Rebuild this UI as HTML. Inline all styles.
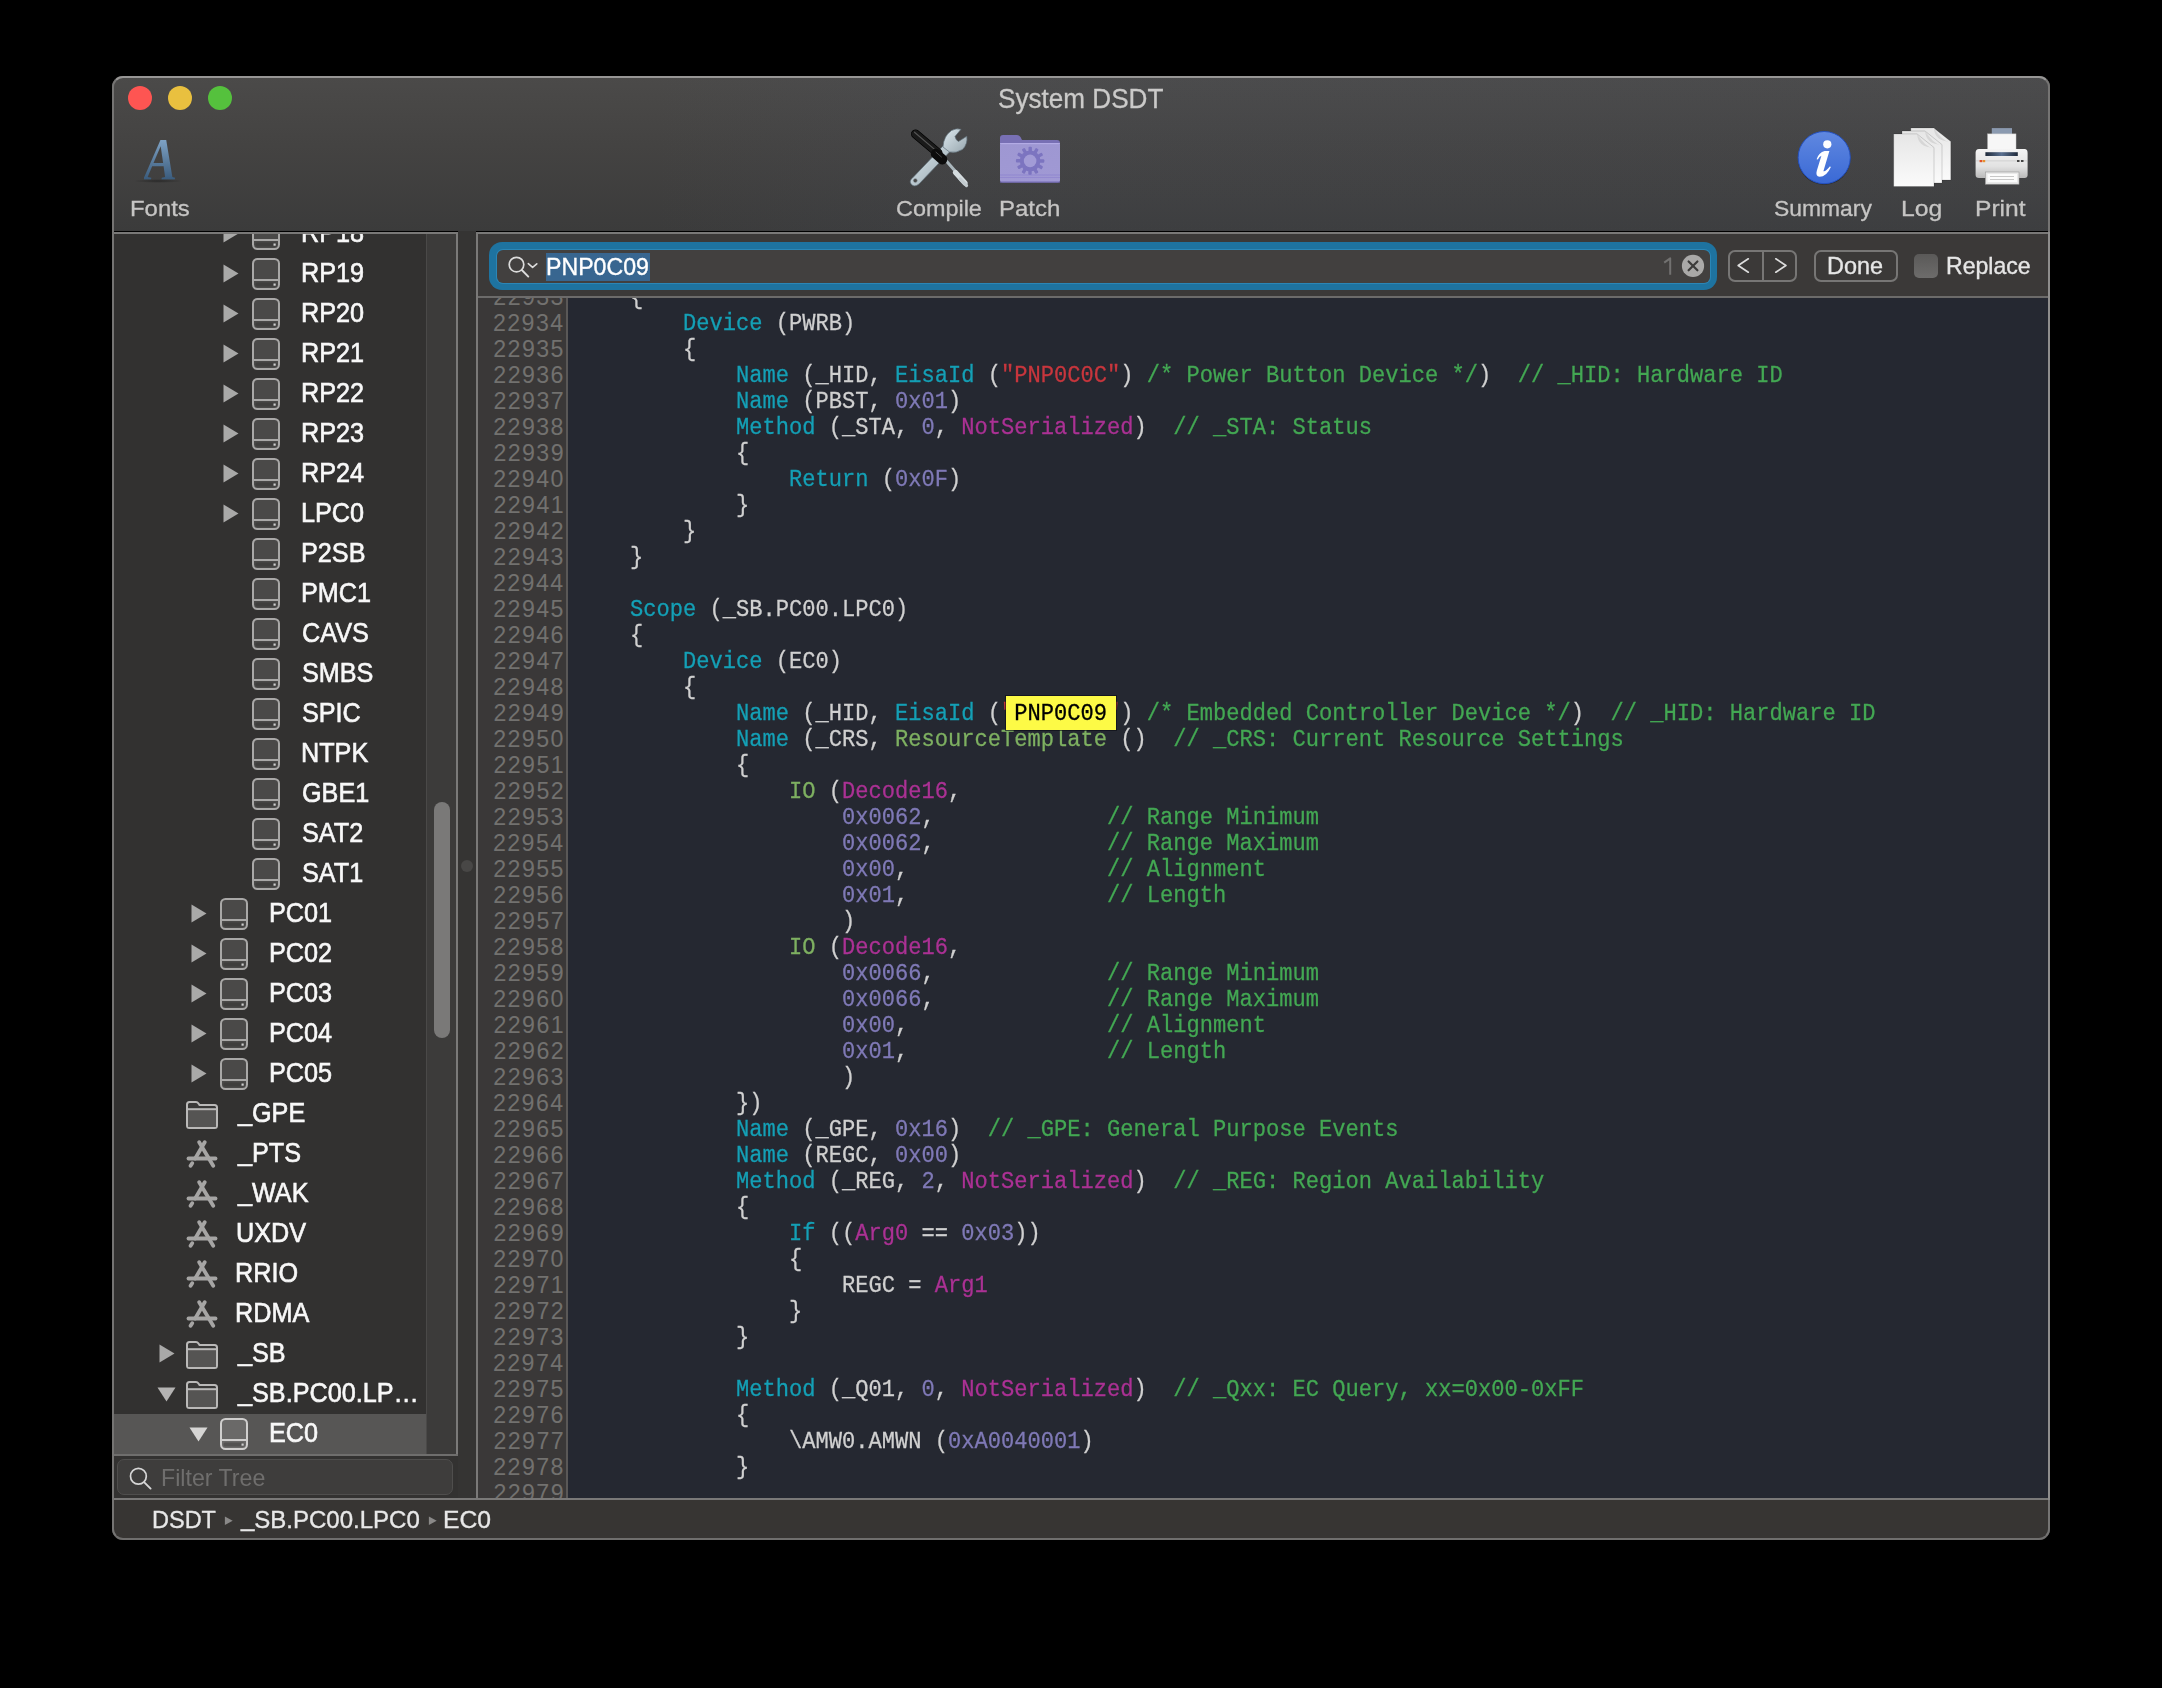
<!DOCTYPE html>
<html><head><meta charset="utf-8"><title>System DSDT</title>
<style>
html,body{margin:0;padding:0;background:#000;width:2162px;height:1688px;overflow:hidden;}
*{box-sizing:border-box;}
#win{position:absolute;left:112px;top:76px;width:1938px;height:1464px;border-radius:11px;overflow:hidden;background:#3a3938;}
#pg{position:absolute;left:-112px;top:-76px;width:2162px;height:1688px;}
#frame{position:absolute;left:112px;top:76px;width:1938px;height:1464px;border-radius:11px;border:2px solid #757473;border-top-color:#979695;border-bottom-color:#6f6e6d;pointer-events:none;}
.hl{color:#c8363d;}
.k{color:#14a0b6}.n{color:#7f79b6}.m{color:#ab3194}.s{color:#c8363d}.c{color:#43a853}.g{color:#7eb061}
</style></head><body>
<div id="win"><div id="pg">

<div style="position:absolute;left:112px;top:76px;width:1938px;height:155px;background:linear-gradient(#4b4a49 0%, #444342 45%, #3b3b3b 100%);"></div>
<div style="position:absolute;left:112px;top:76px;width:1938px;height:155px;background:linear-gradient(90deg, rgba(80,90,110,0) 0%, rgba(80,90,110,0) 28%, rgba(80,90,110,0.10) 42%, rgba(80,90,110,0.10) 100%);"></div>
<div style="position:absolute;left:112px;top:231px;width:1938px;height:1px;background:#000;"></div>
<div style="position:absolute;left:128px;top:86px;width:24px;height:24px;border-radius:50%;background:#fe5552;"></div>
<div style="position:absolute;left:168px;top:86px;width:24px;height:24px;border-radius:50%;background:#e9c03f;"></div>
<div style="position:absolute;left:208px;top:86px;width:24px;height:24px;border-radius:50%;background:#55c13d;"></div>
<div style="position:absolute;left:997.71px;top:78.33px;line-height:41px;font-size:27.326px;font-family:'Liberation Sans', sans-serif;color:#cbcac9;white-space:pre;transform:scaleX(0.9561);transform-origin:0 0;-webkit-text-stroke:0.3px #cbcac9;">System DSDT</div>
<div style="position:absolute;left:129.84px;top:190.84px;line-height:34px;font-size:22.675px;font-family:'Liberation Sans', sans-serif;color:#c6c5c4;white-space:pre;transform:scaleX(1.0550);transform-origin:0 0;-webkit-text-stroke:0.3px #c6c5c4;">Fonts</div>
<div style="position:absolute;left:895.51px;top:190.84px;line-height:34px;font-size:22.675px;font-family:'Liberation Sans', sans-serif;color:#c6c5c4;white-space:pre;transform:scaleX(1.0332);transform-origin:0 0;-webkit-text-stroke:0.3px #c6c5c4;">Compile</div>
<div style="position:absolute;left:998.73px;top:190.84px;line-height:34px;font-size:22.675px;font-family:'Liberation Sans', sans-serif;color:#c6c5c4;white-space:pre;transform:scaleX(1.0595);transform-origin:0 0;-webkit-text-stroke:0.3px #c6c5c4;">Patch</div>
<div style="position:absolute;left:1774.46px;top:190.84px;line-height:34px;font-size:22.675px;font-family:'Liberation Sans', sans-serif;color:#c6c5c4;white-space:pre;transform:scaleX(1.0100);transform-origin:0 0;-webkit-text-stroke:0.3px #c6c5c4;">Summary</div>
<div style="position:absolute;left:1900.77px;top:190.84px;line-height:34px;font-size:22.675px;font-family:'Liberation Sans', sans-serif;color:#c6c5c4;white-space:pre;transform:scaleX(1.0924);transform-origin:0 0;-webkit-text-stroke:0.3px #c6c5c4;">Log</div>
<div style="position:absolute;left:1975.38px;top:190.84px;line-height:34px;font-size:22.675px;font-family:'Liberation Sans', sans-serif;color:#c6c5c4;white-space:pre;transform:scaleX(1.0853);transform-origin:0 0;-webkit-text-stroke:0.3px #c6c5c4;">Print</div>
<div style="position:absolute;left:112px;top:232px;width:346px;height:2px;background:#7a7978;"></div>
<div style="position:absolute;left:112px;top:234px;width:314px;height:1221px;background:#323130;"></div>
<div style="position:absolute;left:426px;top:234px;width:1px;height:1221px;background:#4a4948;"></div>
<div style="position:absolute;left:427px;top:234px;width:29px;height:1221px;background:#3c3b3a;"></div>
<div style="position:absolute;left:456px;top:232px;width:2px;height:1223px;background:#7b7a79;"></div>
<div style="position:absolute;left:458px;top:231px;width:18px;height:1268px;background:#353433;"></div>
<div style="position:absolute;left:461px;top:860px;width:12px;height:12px;border-radius:50%;background:#484746;"></div>
<div style="position:absolute;left:434px;top:802px;width:16px;height:236px;border-radius:8px;background:#7a7978;"></div>
<div style="position:absolute;left:112px;top:1454px;width:346px;height:2px;background:#6f6e6d;"></div>
<div style="position:absolute;left:112px;top:1456px;width:346px;height:43px;background:#333231;"></div>
<div style="position:absolute;left:117px;top:1459px;width:336px;height:36px;border-radius:7px;background:#3e3d3c;border:1px solid #4f4e4d;"></div>
<div style="position:absolute;left:476px;top:232px;width:1574px;height:2px;background:#7a7978;"></div>
<div style="position:absolute;left:476px;top:234px;width:2px;height:1265px;background:#7a7978;"></div>
<div style="position:absolute;left:478px;top:234px;width:1572px;height:63px;background:#3b3938;"></div>
<div style="position:absolute;left:478px;top:296px;width:1572px;height:2px;background:#6c6b6a;"></div>
<div style="position:absolute;left:478px;top:298px;width:88px;height:1201px;background:#3a3838;"></div>
<div style="position:absolute;left:566px;top:298px;width:1.6px;height:1201px;background:#5a5857;"></div>
<div style="position:absolute;left:567.6px;top:298px;width:1482.4px;height:1201px;background:#252831;"></div>
<div style="position:absolute;left:2048px;top:298px;width:2px;height:1201px;background:#8a8988;"></div>
<div style="position:absolute;left:112px;top:1498px;width:1938px;height:2px;background:#7a7978;"></div>
<div style="position:absolute;left:112px;top:1500px;width:1938px;height:40px;background:#373533;"></div>
<div style="position:absolute;left:567px;top:298px;width:1481px;height:1200px;overflow:hidden;">
<div style="position:absolute;left:-567px;top:-298px;width:2162px;height:1688px;">
<div style="position:absolute;left:577.00px;top:285.72px;line-height:26px;font-size:22.080px;font-family:'Liberation Mono', monospace;color:#d0d0d0;white-space:pre;-webkit-text-stroke:0.25px currentColor;transform:scaleY(1.11);transform-origin:0 18.88px;">    {</div>
<div style="position:absolute;left:577.00px;top:311.72px;line-height:26px;font-size:22.080px;font-family:'Liberation Mono', monospace;color:#d0d0d0;white-space:pre;-webkit-text-stroke:0.25px currentColor;transform:scaleY(1.11);transform-origin:0 18.88px;">        <span class="k">Device</span> (PWRB)</div>
<div style="position:absolute;left:577.00px;top:337.72px;line-height:26px;font-size:22.080px;font-family:'Liberation Mono', monospace;color:#d0d0d0;white-space:pre;-webkit-text-stroke:0.25px currentColor;transform:scaleY(1.11);transform-origin:0 18.88px;">        {</div>
<div style="position:absolute;left:577.00px;top:363.72px;line-height:26px;font-size:22.080px;font-family:'Liberation Mono', monospace;color:#d0d0d0;white-space:pre;-webkit-text-stroke:0.25px currentColor;transform:scaleY(1.11);transform-origin:0 18.88px;">            <span class="k">Name</span> (_HID, <span class="k">EisaId</span> (<span class="s">&quot;PNP0C0C&quot;</span>) <span class="c">/* Power Button Device */</span>)  <span class="c">// _HID: Hardware ID</span></div>
<div style="position:absolute;left:577.00px;top:389.72px;line-height:26px;font-size:22.080px;font-family:'Liberation Mono', monospace;color:#d0d0d0;white-space:pre;-webkit-text-stroke:0.25px currentColor;transform:scaleY(1.11);transform-origin:0 18.88px;">            <span class="k">Name</span> (PBST, <span class="n">0x01</span>)</div>
<div style="position:absolute;left:577.00px;top:415.72px;line-height:26px;font-size:22.080px;font-family:'Liberation Mono', monospace;color:#d0d0d0;white-space:pre;-webkit-text-stroke:0.25px currentColor;transform:scaleY(1.11);transform-origin:0 18.88px;">            <span class="k">Method</span> (_STA, <span class="n">0</span>, <span class="m">NotSerialized</span>)  <span class="c">// _STA: Status</span></div>
<div style="position:absolute;left:577.00px;top:441.72px;line-height:26px;font-size:22.080px;font-family:'Liberation Mono', monospace;color:#d0d0d0;white-space:pre;-webkit-text-stroke:0.25px currentColor;transform:scaleY(1.11);transform-origin:0 18.88px;">            {</div>
<div style="position:absolute;left:577.00px;top:467.72px;line-height:26px;font-size:22.080px;font-family:'Liberation Mono', monospace;color:#d0d0d0;white-space:pre;-webkit-text-stroke:0.25px currentColor;transform:scaleY(1.11);transform-origin:0 18.88px;">                <span class="k">Return</span> (<span class="n">0x0F</span>)</div>
<div style="position:absolute;left:577.00px;top:493.72px;line-height:26px;font-size:22.080px;font-family:'Liberation Mono', monospace;color:#d0d0d0;white-space:pre;-webkit-text-stroke:0.25px currentColor;transform:scaleY(1.11);transform-origin:0 18.88px;">            }</div>
<div style="position:absolute;left:577.00px;top:519.72px;line-height:26px;font-size:22.080px;font-family:'Liberation Mono', monospace;color:#d0d0d0;white-space:pre;-webkit-text-stroke:0.25px currentColor;transform:scaleY(1.11);transform-origin:0 18.88px;">        }</div>
<div style="position:absolute;left:577.00px;top:545.72px;line-height:26px;font-size:22.080px;font-family:'Liberation Mono', monospace;color:#d0d0d0;white-space:pre;-webkit-text-stroke:0.25px currentColor;transform:scaleY(1.11);transform-origin:0 18.88px;">    }</div>
<div style="position:absolute;left:577.00px;top:571.72px;line-height:26px;font-size:22.080px;font-family:'Liberation Mono', monospace;color:#d0d0d0;white-space:pre;-webkit-text-stroke:0.25px currentColor;transform:scaleY(1.11);transform-origin:0 18.88px;"></div>
<div style="position:absolute;left:577.00px;top:597.72px;line-height:26px;font-size:22.080px;font-family:'Liberation Mono', monospace;color:#d0d0d0;white-space:pre;-webkit-text-stroke:0.25px currentColor;transform:scaleY(1.11);transform-origin:0 18.88px;">    <span class="k">Scope</span> (_SB.PC00.LPC0)</div>
<div style="position:absolute;left:577.00px;top:623.72px;line-height:26px;font-size:22.080px;font-family:'Liberation Mono', monospace;color:#d0d0d0;white-space:pre;-webkit-text-stroke:0.25px currentColor;transform:scaleY(1.11);transform-origin:0 18.88px;">    {</div>
<div style="position:absolute;left:577.00px;top:649.72px;line-height:26px;font-size:22.080px;font-family:'Liberation Mono', monospace;color:#d0d0d0;white-space:pre;-webkit-text-stroke:0.25px currentColor;transform:scaleY(1.11);transform-origin:0 18.88px;">        <span class="k">Device</span> (EC0)</div>
<div style="position:absolute;left:577.00px;top:675.72px;line-height:26px;font-size:22.080px;font-family:'Liberation Mono', monospace;color:#d0d0d0;white-space:pre;-webkit-text-stroke:0.25px currentColor;transform:scaleY(1.11);transform-origin:0 18.88px;">        {</div>
<div style="position:absolute;left:577.00px;top:701.72px;line-height:26px;font-size:22.080px;font-family:'Liberation Mono', monospace;color:#d0d0d0;white-space:pre;-webkit-text-stroke:0.25px currentColor;transform:scaleY(1.11);transform-origin:0 18.88px;">            <span class="k">Name</span> (_HID, <span class="k">EisaId</span> (<span class="s">"</span><span class="hl">PNP0C09</span><span class="s">"</span>) <span class="c">/* Embedded Controller Device */</span>)  <span class="c">// _HID: Hardware ID</span></div>
<div style="position:absolute;left:577.00px;top:727.72px;line-height:26px;font-size:22.080px;font-family:'Liberation Mono', monospace;color:#d0d0d0;white-space:pre;-webkit-text-stroke:0.25px currentColor;transform:scaleY(1.11);transform-origin:0 18.88px;">            <span class="k">Name</span> (_CRS, <span class="g">ResourceTemplate</span> ()  <span class="c">// _CRS: Current Resource Settings</span></div>
<div style="position:absolute;left:577.00px;top:753.72px;line-height:26px;font-size:22.080px;font-family:'Liberation Mono', monospace;color:#d0d0d0;white-space:pre;-webkit-text-stroke:0.25px currentColor;transform:scaleY(1.11);transform-origin:0 18.88px;">            {</div>
<div style="position:absolute;left:577.00px;top:779.72px;line-height:26px;font-size:22.080px;font-family:'Liberation Mono', monospace;color:#d0d0d0;white-space:pre;-webkit-text-stroke:0.25px currentColor;transform:scaleY(1.11);transform-origin:0 18.88px;">                <span class="g">IO</span> (<span class="m">Decode16</span>,</div>
<div style="position:absolute;left:577.00px;top:805.72px;line-height:26px;font-size:22.080px;font-family:'Liberation Mono', monospace;color:#d0d0d0;white-space:pre;-webkit-text-stroke:0.25px currentColor;transform:scaleY(1.11);transform-origin:0 18.88px;">                    <span class="n">0x0062</span>,             <span class="c">// Range Minimum</span></div>
<div style="position:absolute;left:577.00px;top:831.72px;line-height:26px;font-size:22.080px;font-family:'Liberation Mono', monospace;color:#d0d0d0;white-space:pre;-webkit-text-stroke:0.25px currentColor;transform:scaleY(1.11);transform-origin:0 18.88px;">                    <span class="n">0x0062</span>,             <span class="c">// Range Maximum</span></div>
<div style="position:absolute;left:577.00px;top:857.72px;line-height:26px;font-size:22.080px;font-family:'Liberation Mono', monospace;color:#d0d0d0;white-space:pre;-webkit-text-stroke:0.25px currentColor;transform:scaleY(1.11);transform-origin:0 18.88px;">                    <span class="n">0x00</span>,               <span class="c">// Alignment</span></div>
<div style="position:absolute;left:577.00px;top:883.72px;line-height:26px;font-size:22.080px;font-family:'Liberation Mono', monospace;color:#d0d0d0;white-space:pre;-webkit-text-stroke:0.25px currentColor;transform:scaleY(1.11);transform-origin:0 18.88px;">                    <span class="n">0x01</span>,               <span class="c">// Length</span></div>
<div style="position:absolute;left:577.00px;top:909.72px;line-height:26px;font-size:22.080px;font-family:'Liberation Mono', monospace;color:#d0d0d0;white-space:pre;-webkit-text-stroke:0.25px currentColor;transform:scaleY(1.11);transform-origin:0 18.88px;">                    )</div>
<div style="position:absolute;left:577.00px;top:935.72px;line-height:26px;font-size:22.080px;font-family:'Liberation Mono', monospace;color:#d0d0d0;white-space:pre;-webkit-text-stroke:0.25px currentColor;transform:scaleY(1.11);transform-origin:0 18.88px;">                <span class="g">IO</span> (<span class="m">Decode16</span>,</div>
<div style="position:absolute;left:577.00px;top:961.72px;line-height:26px;font-size:22.080px;font-family:'Liberation Mono', monospace;color:#d0d0d0;white-space:pre;-webkit-text-stroke:0.25px currentColor;transform:scaleY(1.11);transform-origin:0 18.88px;">                    <span class="n">0x0066</span>,             <span class="c">// Range Minimum</span></div>
<div style="position:absolute;left:577.00px;top:987.72px;line-height:26px;font-size:22.080px;font-family:'Liberation Mono', monospace;color:#d0d0d0;white-space:pre;-webkit-text-stroke:0.25px currentColor;transform:scaleY(1.11);transform-origin:0 18.88px;">                    <span class="n">0x0066</span>,             <span class="c">// Range Maximum</span></div>
<div style="position:absolute;left:577.00px;top:1013.72px;line-height:26px;font-size:22.080px;font-family:'Liberation Mono', monospace;color:#d0d0d0;white-space:pre;-webkit-text-stroke:0.25px currentColor;transform:scaleY(1.11);transform-origin:0 18.88px;">                    <span class="n">0x00</span>,               <span class="c">// Alignment</span></div>
<div style="position:absolute;left:577.00px;top:1039.72px;line-height:26px;font-size:22.080px;font-family:'Liberation Mono', monospace;color:#d0d0d0;white-space:pre;-webkit-text-stroke:0.25px currentColor;transform:scaleY(1.11);transform-origin:0 18.88px;">                    <span class="n">0x01</span>,               <span class="c">// Length</span></div>
<div style="position:absolute;left:577.00px;top:1065.72px;line-height:26px;font-size:22.080px;font-family:'Liberation Mono', monospace;color:#d0d0d0;white-space:pre;-webkit-text-stroke:0.25px currentColor;transform:scaleY(1.11);transform-origin:0 18.88px;">                    )</div>
<div style="position:absolute;left:577.00px;top:1091.72px;line-height:26px;font-size:22.080px;font-family:'Liberation Mono', monospace;color:#d0d0d0;white-space:pre;-webkit-text-stroke:0.25px currentColor;transform:scaleY(1.11);transform-origin:0 18.88px;">            })</div>
<div style="position:absolute;left:577.00px;top:1117.72px;line-height:26px;font-size:22.080px;font-family:'Liberation Mono', monospace;color:#d0d0d0;white-space:pre;-webkit-text-stroke:0.25px currentColor;transform:scaleY(1.11);transform-origin:0 18.88px;">            <span class="k">Name</span> (_GPE, <span class="n">0x16</span>)  <span class="c">// _GPE: General Purpose Events</span></div>
<div style="position:absolute;left:577.00px;top:1143.72px;line-height:26px;font-size:22.080px;font-family:'Liberation Mono', monospace;color:#d0d0d0;white-space:pre;-webkit-text-stroke:0.25px currentColor;transform:scaleY(1.11);transform-origin:0 18.88px;">            <span class="k">Name</span> (REGC, <span class="n">0x00</span>)</div>
<div style="position:absolute;left:577.00px;top:1169.72px;line-height:26px;font-size:22.080px;font-family:'Liberation Mono', monospace;color:#d0d0d0;white-space:pre;-webkit-text-stroke:0.25px currentColor;transform:scaleY(1.11);transform-origin:0 18.88px;">            <span class="k">Method</span> (_REG, <span class="n">2</span>, <span class="m">NotSerialized</span>)  <span class="c">// _REG: Region Availability</span></div>
<div style="position:absolute;left:577.00px;top:1195.72px;line-height:26px;font-size:22.080px;font-family:'Liberation Mono', monospace;color:#d0d0d0;white-space:pre;-webkit-text-stroke:0.25px currentColor;transform:scaleY(1.11);transform-origin:0 18.88px;">            {</div>
<div style="position:absolute;left:577.00px;top:1221.72px;line-height:26px;font-size:22.080px;font-family:'Liberation Mono', monospace;color:#d0d0d0;white-space:pre;-webkit-text-stroke:0.25px currentColor;transform:scaleY(1.11);transform-origin:0 18.88px;">                <span class="k">If</span> ((<span class="m">Arg0</span> == <span class="n">0x03</span>))</div>
<div style="position:absolute;left:577.00px;top:1247.72px;line-height:26px;font-size:22.080px;font-family:'Liberation Mono', monospace;color:#d0d0d0;white-space:pre;-webkit-text-stroke:0.25px currentColor;transform:scaleY(1.11);transform-origin:0 18.88px;">                {</div>
<div style="position:absolute;left:577.00px;top:1273.72px;line-height:26px;font-size:22.080px;font-family:'Liberation Mono', monospace;color:#d0d0d0;white-space:pre;-webkit-text-stroke:0.25px currentColor;transform:scaleY(1.11);transform-origin:0 18.88px;">                    REGC = <span class="m">Arg1</span></div>
<div style="position:absolute;left:577.00px;top:1299.72px;line-height:26px;font-size:22.080px;font-family:'Liberation Mono', monospace;color:#d0d0d0;white-space:pre;-webkit-text-stroke:0.25px currentColor;transform:scaleY(1.11);transform-origin:0 18.88px;">                }</div>
<div style="position:absolute;left:577.00px;top:1325.72px;line-height:26px;font-size:22.080px;font-family:'Liberation Mono', monospace;color:#d0d0d0;white-space:pre;-webkit-text-stroke:0.25px currentColor;transform:scaleY(1.11);transform-origin:0 18.88px;">            }</div>
<div style="position:absolute;left:577.00px;top:1351.72px;line-height:26px;font-size:22.080px;font-family:'Liberation Mono', monospace;color:#d0d0d0;white-space:pre;-webkit-text-stroke:0.25px currentColor;transform:scaleY(1.11);transform-origin:0 18.88px;"></div>
<div style="position:absolute;left:577.00px;top:1377.72px;line-height:26px;font-size:22.080px;font-family:'Liberation Mono', monospace;color:#d0d0d0;white-space:pre;-webkit-text-stroke:0.25px currentColor;transform:scaleY(1.11);transform-origin:0 18.88px;">            <span class="k">Method</span> (_Q01, <span class="n">0</span>, <span class="m">NotSerialized</span>)  <span class="c">// _Qxx: EC Query, xx=0x00-0xFF</span></div>
<div style="position:absolute;left:577.00px;top:1403.72px;line-height:26px;font-size:22.080px;font-family:'Liberation Mono', monospace;color:#d0d0d0;white-space:pre;-webkit-text-stroke:0.25px currentColor;transform:scaleY(1.11);transform-origin:0 18.88px;">            {</div>
<div style="position:absolute;left:577.00px;top:1429.72px;line-height:26px;font-size:22.080px;font-family:'Liberation Mono', monospace;color:#d0d0d0;white-space:pre;-webkit-text-stroke:0.25px currentColor;transform:scaleY(1.11);transform-origin:0 18.88px;">                \AMW0.AMWN (<span class="n">0xA0040001</span>)</div>
<div style="position:absolute;left:577.00px;top:1455.72px;line-height:26px;font-size:22.080px;font-family:'Liberation Mono', monospace;color:#d0d0d0;white-space:pre;-webkit-text-stroke:0.25px currentColor;transform:scaleY(1.11);transform-origin:0 18.88px;">            }</div>
<div style="position:absolute;left:577.00px;top:1481.72px;line-height:26px;font-size:22.080px;font-family:'Liberation Mono', monospace;color:#d0d0d0;white-space:pre;-webkit-text-stroke:0.25px currentColor;transform:scaleY(1.11);transform-origin:0 18.88px;"></div>
<div style="position:absolute;left:1005.8px;top:695.7px;width:110.4px;height:34px;background:#fdfa46;box-shadow:0 0 0 1px rgba(10,10,20,0.6);"></div>
<div style="position:absolute;left:1014.26px;top:701.72px;line-height:26px;font-size:22.080px;font-family:'Liberation Mono', monospace;color:#000;white-space:pre;-webkit-text-stroke:0.3px #000;transform:scaleY(1.11);transform-origin:0 18.88px;">PNP0C09</div>
</div></div>
<div style="position:absolute;left:478px;top:298px;width:87px;height:1200px;overflow:hidden;">
<div style="position:absolute;left:-478px;top:-298px;width:2162px;height:1688px;">
<div style="position:absolute;left:493.33px;top:283.56px;line-height:26px;font-size:23.20px;letter-spacing:1.42px;font-family:'Liberation Sans', sans-serif;color:#72716f;white-space:pre;">22933</div>
<div style="position:absolute;left:492.99px;top:309.56px;line-height:26px;font-size:23.20px;letter-spacing:1.42px;font-family:'Liberation Sans', sans-serif;color:#72716f;white-space:pre;">22934</div>
<div style="position:absolute;left:493.28px;top:335.56px;line-height:26px;font-size:23.20px;letter-spacing:1.42px;font-family:'Liberation Sans', sans-serif;color:#72716f;white-space:pre;">22935</div>
<div style="position:absolute;left:493.33px;top:361.56px;line-height:26px;font-size:23.20px;letter-spacing:1.42px;font-family:'Liberation Sans', sans-serif;color:#72716f;white-space:pre;">22936</div>
<div style="position:absolute;left:493.47px;top:387.56px;line-height:26px;font-size:23.20px;letter-spacing:1.42px;font-family:'Liberation Sans', sans-serif;color:#72716f;white-space:pre;">22937</div>
<div style="position:absolute;left:493.31px;top:413.56px;line-height:26px;font-size:23.20px;letter-spacing:1.42px;font-family:'Liberation Sans', sans-serif;color:#72716f;white-space:pre;">22938</div>
<div style="position:absolute;left:493.41px;top:439.56px;line-height:26px;font-size:23.20px;letter-spacing:1.42px;font-family:'Liberation Sans', sans-serif;color:#72716f;white-space:pre;">22939</div>
<div style="position:absolute;left:493.21px;top:465.56px;line-height:26px;font-size:23.20px;letter-spacing:1.42px;font-family:'Liberation Sans', sans-serif;color:#72716f;white-space:pre;">22940</div>
<div style="position:absolute;left:493.44px;top:491.56px;line-height:26px;font-size:23.20px;letter-spacing:1.42px;font-family:'Liberation Sans', sans-serif;color:#72716f;white-space:pre;">22941</div>
<div style="position:absolute;left:493.47px;top:517.56px;line-height:26px;font-size:23.20px;letter-spacing:1.42px;font-family:'Liberation Sans', sans-serif;color:#72716f;white-space:pre;">22942</div>
<div style="position:absolute;left:493.33px;top:543.56px;line-height:26px;font-size:23.20px;letter-spacing:1.42px;font-family:'Liberation Sans', sans-serif;color:#72716f;white-space:pre;">22943</div>
<div style="position:absolute;left:492.99px;top:569.56px;line-height:26px;font-size:23.20px;letter-spacing:1.42px;font-family:'Liberation Sans', sans-serif;color:#72716f;white-space:pre;">22944</div>
<div style="position:absolute;left:493.28px;top:595.56px;line-height:26px;font-size:23.20px;letter-spacing:1.42px;font-family:'Liberation Sans', sans-serif;color:#72716f;white-space:pre;">22945</div>
<div style="position:absolute;left:493.33px;top:621.56px;line-height:26px;font-size:23.20px;letter-spacing:1.42px;font-family:'Liberation Sans', sans-serif;color:#72716f;white-space:pre;">22946</div>
<div style="position:absolute;left:493.47px;top:647.56px;line-height:26px;font-size:23.20px;letter-spacing:1.42px;font-family:'Liberation Sans', sans-serif;color:#72716f;white-space:pre;">22947</div>
<div style="position:absolute;left:493.31px;top:673.56px;line-height:26px;font-size:23.20px;letter-spacing:1.42px;font-family:'Liberation Sans', sans-serif;color:#72716f;white-space:pre;">22948</div>
<div style="position:absolute;left:493.41px;top:699.56px;line-height:26px;font-size:23.20px;letter-spacing:1.42px;font-family:'Liberation Sans', sans-serif;color:#72716f;white-space:pre;">22949</div>
<div style="position:absolute;left:493.21px;top:725.56px;line-height:26px;font-size:23.20px;letter-spacing:1.42px;font-family:'Liberation Sans', sans-serif;color:#72716f;white-space:pre;">22950</div>
<div style="position:absolute;left:493.44px;top:751.56px;line-height:26px;font-size:23.20px;letter-spacing:1.42px;font-family:'Liberation Sans', sans-serif;color:#72716f;white-space:pre;">22951</div>
<div style="position:absolute;left:493.47px;top:777.56px;line-height:26px;font-size:23.20px;letter-spacing:1.42px;font-family:'Liberation Sans', sans-serif;color:#72716f;white-space:pre;">22952</div>
<div style="position:absolute;left:493.33px;top:803.56px;line-height:26px;font-size:23.20px;letter-spacing:1.42px;font-family:'Liberation Sans', sans-serif;color:#72716f;white-space:pre;">22953</div>
<div style="position:absolute;left:492.99px;top:829.56px;line-height:26px;font-size:23.20px;letter-spacing:1.42px;font-family:'Liberation Sans', sans-serif;color:#72716f;white-space:pre;">22954</div>
<div style="position:absolute;left:493.28px;top:855.56px;line-height:26px;font-size:23.20px;letter-spacing:1.42px;font-family:'Liberation Sans', sans-serif;color:#72716f;white-space:pre;">22955</div>
<div style="position:absolute;left:493.33px;top:881.56px;line-height:26px;font-size:23.20px;letter-spacing:1.42px;font-family:'Liberation Sans', sans-serif;color:#72716f;white-space:pre;">22956</div>
<div style="position:absolute;left:493.47px;top:907.56px;line-height:26px;font-size:23.20px;letter-spacing:1.42px;font-family:'Liberation Sans', sans-serif;color:#72716f;white-space:pre;">22957</div>
<div style="position:absolute;left:493.31px;top:933.56px;line-height:26px;font-size:23.20px;letter-spacing:1.42px;font-family:'Liberation Sans', sans-serif;color:#72716f;white-space:pre;">22958</div>
<div style="position:absolute;left:493.41px;top:959.56px;line-height:26px;font-size:23.20px;letter-spacing:1.42px;font-family:'Liberation Sans', sans-serif;color:#72716f;white-space:pre;">22959</div>
<div style="position:absolute;left:493.21px;top:985.56px;line-height:26px;font-size:23.20px;letter-spacing:1.42px;font-family:'Liberation Sans', sans-serif;color:#72716f;white-space:pre;">22960</div>
<div style="position:absolute;left:493.44px;top:1011.56px;line-height:26px;font-size:23.20px;letter-spacing:1.42px;font-family:'Liberation Sans', sans-serif;color:#72716f;white-space:pre;">22961</div>
<div style="position:absolute;left:493.47px;top:1037.56px;line-height:26px;font-size:23.20px;letter-spacing:1.42px;font-family:'Liberation Sans', sans-serif;color:#72716f;white-space:pre;">22962</div>
<div style="position:absolute;left:493.33px;top:1063.56px;line-height:26px;font-size:23.20px;letter-spacing:1.42px;font-family:'Liberation Sans', sans-serif;color:#72716f;white-space:pre;">22963</div>
<div style="position:absolute;left:492.99px;top:1089.56px;line-height:26px;font-size:23.20px;letter-spacing:1.42px;font-family:'Liberation Sans', sans-serif;color:#72716f;white-space:pre;">22964</div>
<div style="position:absolute;left:493.28px;top:1115.56px;line-height:26px;font-size:23.20px;letter-spacing:1.42px;font-family:'Liberation Sans', sans-serif;color:#72716f;white-space:pre;">22965</div>
<div style="position:absolute;left:493.33px;top:1141.56px;line-height:26px;font-size:23.20px;letter-spacing:1.42px;font-family:'Liberation Sans', sans-serif;color:#72716f;white-space:pre;">22966</div>
<div style="position:absolute;left:493.47px;top:1167.56px;line-height:26px;font-size:23.20px;letter-spacing:1.42px;font-family:'Liberation Sans', sans-serif;color:#72716f;white-space:pre;">22967</div>
<div style="position:absolute;left:493.31px;top:1193.56px;line-height:26px;font-size:23.20px;letter-spacing:1.42px;font-family:'Liberation Sans', sans-serif;color:#72716f;white-space:pre;">22968</div>
<div style="position:absolute;left:493.41px;top:1219.56px;line-height:26px;font-size:23.20px;letter-spacing:1.42px;font-family:'Liberation Sans', sans-serif;color:#72716f;white-space:pre;">22969</div>
<div style="position:absolute;left:493.21px;top:1245.56px;line-height:26px;font-size:23.20px;letter-spacing:1.42px;font-family:'Liberation Sans', sans-serif;color:#72716f;white-space:pre;">22970</div>
<div style="position:absolute;left:493.44px;top:1271.56px;line-height:26px;font-size:23.20px;letter-spacing:1.42px;font-family:'Liberation Sans', sans-serif;color:#72716f;white-space:pre;">22971</div>
<div style="position:absolute;left:493.47px;top:1297.56px;line-height:26px;font-size:23.20px;letter-spacing:1.42px;font-family:'Liberation Sans', sans-serif;color:#72716f;white-space:pre;">22972</div>
<div style="position:absolute;left:493.33px;top:1323.56px;line-height:26px;font-size:23.20px;letter-spacing:1.42px;font-family:'Liberation Sans', sans-serif;color:#72716f;white-space:pre;">22973</div>
<div style="position:absolute;left:492.99px;top:1349.56px;line-height:26px;font-size:23.20px;letter-spacing:1.42px;font-family:'Liberation Sans', sans-serif;color:#72716f;white-space:pre;">22974</div>
<div style="position:absolute;left:493.28px;top:1375.56px;line-height:26px;font-size:23.20px;letter-spacing:1.42px;font-family:'Liberation Sans', sans-serif;color:#72716f;white-space:pre;">22975</div>
<div style="position:absolute;left:493.33px;top:1401.56px;line-height:26px;font-size:23.20px;letter-spacing:1.42px;font-family:'Liberation Sans', sans-serif;color:#72716f;white-space:pre;">22976</div>
<div style="position:absolute;left:493.47px;top:1427.56px;line-height:26px;font-size:23.20px;letter-spacing:1.42px;font-family:'Liberation Sans', sans-serif;color:#72716f;white-space:pre;">22977</div>
<div style="position:absolute;left:493.31px;top:1453.56px;line-height:26px;font-size:23.20px;letter-spacing:1.42px;font-family:'Liberation Sans', sans-serif;color:#72716f;white-space:pre;">22978</div>
<div style="position:absolute;left:493.41px;top:1479.56px;line-height:26px;font-size:23.20px;letter-spacing:1.42px;font-family:'Liberation Sans', sans-serif;color:#72716f;white-space:pre;">22979</div>
</div></div>
<div style="position:absolute;left:112px;top:234px;width:314px;height:1220px;overflow:hidden;">
<div style="position:absolute;left:-112px;top:-234px;width:2162px;height:1688px;">
<svg style="position:absolute;left:252px;top:218px" width="28" height="32" viewBox="0 0 28 32"><rect x="1" y="1" width="26" height="30" rx="4.5" fill="#4a4948" stroke="#a9a8a7" stroke-width="2"/><path d="M2 22 H26" stroke="#a9a8a7" stroke-width="2"/><rect x="3.5" y="24.5" width="21" height="4" rx="1.5" fill="#3f3e3d"/><rect x="21.5" y="25.5" width="2.2" height="2.2" fill="#d0d0d0"/></svg>
<svg style="position:absolute;left:223px;top:224px" width="16" height="19" viewBox="0 0 16 19"><path d="M0.5 0.5 L15.5 9.5 L0.5 18.5 Z" fill="#a9a9a8"/></svg>
<div style="position:absolute;left:301.03px;top:213.18px;line-height:40px;font-size:27.762px;font-family:'Liberation Sans', sans-serif;color:#f8f8f8;white-space:pre;-webkit-text-stroke:0.65px #f8f8f8;transform:scaleX(0.908);transform-origin:0 0;">RP18</div>
<svg style="position:absolute;left:252px;top:258px" width="28" height="32" viewBox="0 0 28 32"><rect x="1" y="1" width="26" height="30" rx="4.5" fill="#4a4948" stroke="#a9a8a7" stroke-width="2"/><path d="M2 22 H26" stroke="#a9a8a7" stroke-width="2"/><rect x="3.5" y="24.5" width="21" height="4" rx="1.5" fill="#3f3e3d"/><rect x="21.5" y="25.5" width="2.2" height="2.2" fill="#d0d0d0"/></svg>
<svg style="position:absolute;left:223px;top:264px" width="16" height="19" viewBox="0 0 16 19"><path d="M0.5 0.5 L15.5 9.5 L0.5 18.5 Z" fill="#a9a9a8"/></svg>
<div style="position:absolute;left:301.03px;top:253.18px;line-height:40px;font-size:27.762px;font-family:'Liberation Sans', sans-serif;color:#f8f8f8;white-space:pre;-webkit-text-stroke:0.65px #f8f8f8;transform:scaleX(0.908);transform-origin:0 0;">RP19</div>
<svg style="position:absolute;left:252px;top:298px" width="28" height="32" viewBox="0 0 28 32"><rect x="1" y="1" width="26" height="30" rx="4.5" fill="#4a4948" stroke="#a9a8a7" stroke-width="2"/><path d="M2 22 H26" stroke="#a9a8a7" stroke-width="2"/><rect x="3.5" y="24.5" width="21" height="4" rx="1.5" fill="#3f3e3d"/><rect x="21.5" y="25.5" width="2.2" height="2.2" fill="#d0d0d0"/></svg>
<svg style="position:absolute;left:223px;top:304px" width="16" height="19" viewBox="0 0 16 19"><path d="M0.5 0.5 L15.5 9.5 L0.5 18.5 Z" fill="#a9a9a8"/></svg>
<div style="position:absolute;left:301.03px;top:293.18px;line-height:40px;font-size:27.762px;font-family:'Liberation Sans', sans-serif;color:#f8f8f8;white-space:pre;-webkit-text-stroke:0.65px #f8f8f8;transform:scaleX(0.908);transform-origin:0 0;">RP20</div>
<svg style="position:absolute;left:252px;top:338px" width="28" height="32" viewBox="0 0 28 32"><rect x="1" y="1" width="26" height="30" rx="4.5" fill="#4a4948" stroke="#a9a8a7" stroke-width="2"/><path d="M2 22 H26" stroke="#a9a8a7" stroke-width="2"/><rect x="3.5" y="24.5" width="21" height="4" rx="1.5" fill="#3f3e3d"/><rect x="21.5" y="25.5" width="2.2" height="2.2" fill="#d0d0d0"/></svg>
<svg style="position:absolute;left:223px;top:344px" width="16" height="19" viewBox="0 0 16 19"><path d="M0.5 0.5 L15.5 9.5 L0.5 18.5 Z" fill="#a9a9a8"/></svg>
<div style="position:absolute;left:301.03px;top:333.18px;line-height:40px;font-size:27.762px;font-family:'Liberation Sans', sans-serif;color:#f8f8f8;white-space:pre;-webkit-text-stroke:0.65px #f8f8f8;transform:scaleX(0.908);transform-origin:0 0;">RP21</div>
<svg style="position:absolute;left:252px;top:378px" width="28" height="32" viewBox="0 0 28 32"><rect x="1" y="1" width="26" height="30" rx="4.5" fill="#4a4948" stroke="#a9a8a7" stroke-width="2"/><path d="M2 22 H26" stroke="#a9a8a7" stroke-width="2"/><rect x="3.5" y="24.5" width="21" height="4" rx="1.5" fill="#3f3e3d"/><rect x="21.5" y="25.5" width="2.2" height="2.2" fill="#d0d0d0"/></svg>
<svg style="position:absolute;left:223px;top:384px" width="16" height="19" viewBox="0 0 16 19"><path d="M0.5 0.5 L15.5 9.5 L0.5 18.5 Z" fill="#a9a9a8"/></svg>
<div style="position:absolute;left:301.03px;top:373.18px;line-height:40px;font-size:27.762px;font-family:'Liberation Sans', sans-serif;color:#f8f8f8;white-space:pre;-webkit-text-stroke:0.65px #f8f8f8;transform:scaleX(0.908);transform-origin:0 0;">RP22</div>
<svg style="position:absolute;left:252px;top:418px" width="28" height="32" viewBox="0 0 28 32"><rect x="1" y="1" width="26" height="30" rx="4.5" fill="#4a4948" stroke="#a9a8a7" stroke-width="2"/><path d="M2 22 H26" stroke="#a9a8a7" stroke-width="2"/><rect x="3.5" y="24.5" width="21" height="4" rx="1.5" fill="#3f3e3d"/><rect x="21.5" y="25.5" width="2.2" height="2.2" fill="#d0d0d0"/></svg>
<svg style="position:absolute;left:223px;top:424px" width="16" height="19" viewBox="0 0 16 19"><path d="M0.5 0.5 L15.5 9.5 L0.5 18.5 Z" fill="#a9a9a8"/></svg>
<div style="position:absolute;left:301.03px;top:413.18px;line-height:40px;font-size:27.762px;font-family:'Liberation Sans', sans-serif;color:#f8f8f8;white-space:pre;-webkit-text-stroke:0.65px #f8f8f8;transform:scaleX(0.908);transform-origin:0 0;">RP23</div>
<svg style="position:absolute;left:252px;top:458px" width="28" height="32" viewBox="0 0 28 32"><rect x="1" y="1" width="26" height="30" rx="4.5" fill="#4a4948" stroke="#a9a8a7" stroke-width="2"/><path d="M2 22 H26" stroke="#a9a8a7" stroke-width="2"/><rect x="3.5" y="24.5" width="21" height="4" rx="1.5" fill="#3f3e3d"/><rect x="21.5" y="25.5" width="2.2" height="2.2" fill="#d0d0d0"/></svg>
<svg style="position:absolute;left:223px;top:464px" width="16" height="19" viewBox="0 0 16 19"><path d="M0.5 0.5 L15.5 9.5 L0.5 18.5 Z" fill="#a9a9a8"/></svg>
<div style="position:absolute;left:301.03px;top:453.18px;line-height:40px;font-size:27.762px;font-family:'Liberation Sans', sans-serif;color:#f8f8f8;white-space:pre;-webkit-text-stroke:0.65px #f8f8f8;transform:scaleX(0.908);transform-origin:0 0;">RP24</div>
<svg style="position:absolute;left:252px;top:498px" width="28" height="32" viewBox="0 0 28 32"><rect x="1" y="1" width="26" height="30" rx="4.5" fill="#4a4948" stroke="#a9a8a7" stroke-width="2"/><path d="M2 22 H26" stroke="#a9a8a7" stroke-width="2"/><rect x="3.5" y="24.5" width="21" height="4" rx="1.5" fill="#3f3e3d"/><rect x="21.5" y="25.5" width="2.2" height="2.2" fill="#d0d0d0"/></svg>
<svg style="position:absolute;left:223px;top:504px" width="16" height="19" viewBox="0 0 16 19"><path d="M0.5 0.5 L15.5 9.5 L0.5 18.5 Z" fill="#a9a9a8"/></svg>
<div style="position:absolute;left:301.03px;top:493.18px;line-height:40px;font-size:27.762px;font-family:'Liberation Sans', sans-serif;color:#f8f8f8;white-space:pre;-webkit-text-stroke:0.65px #f8f8f8;transform:scaleX(0.908);transform-origin:0 0;">LPC0</div>
<svg style="position:absolute;left:252px;top:538px" width="28" height="32" viewBox="0 0 28 32"><rect x="1" y="1" width="26" height="30" rx="4.5" fill="#4a4948" stroke="#a9a8a7" stroke-width="2"/><path d="M2 22 H26" stroke="#a9a8a7" stroke-width="2"/><rect x="3.5" y="24.5" width="21" height="4" rx="1.5" fill="#3f3e3d"/><rect x="21.5" y="25.5" width="2.2" height="2.2" fill="#d0d0d0"/></svg>
<div style="position:absolute;left:301.03px;top:533.18px;line-height:40px;font-size:27.762px;font-family:'Liberation Sans', sans-serif;color:#f8f8f8;white-space:pre;-webkit-text-stroke:0.65px #f8f8f8;transform:scaleX(0.908);transform-origin:0 0;">P2SB</div>
<svg style="position:absolute;left:252px;top:578px" width="28" height="32" viewBox="0 0 28 32"><rect x="1" y="1" width="26" height="30" rx="4.5" fill="#4a4948" stroke="#a9a8a7" stroke-width="2"/><path d="M2 22 H26" stroke="#a9a8a7" stroke-width="2"/><rect x="3.5" y="24.5" width="21" height="4" rx="1.5" fill="#3f3e3d"/><rect x="21.5" y="25.5" width="2.2" height="2.2" fill="#d0d0d0"/></svg>
<div style="position:absolute;left:301.03px;top:573.18px;line-height:40px;font-size:27.762px;font-family:'Liberation Sans', sans-serif;color:#f8f8f8;white-space:pre;-webkit-text-stroke:0.65px #f8f8f8;transform:scaleX(0.908);transform-origin:0 0;">PMC1</div>
<svg style="position:absolute;left:252px;top:618px" width="28" height="32" viewBox="0 0 28 32"><rect x="1" y="1" width="26" height="30" rx="4.5" fill="#4a4948" stroke="#a9a8a7" stroke-width="2"/><path d="M2 22 H26" stroke="#a9a8a7" stroke-width="2"/><rect x="3.5" y="24.5" width="21" height="4" rx="1.5" fill="#3f3e3d"/><rect x="21.5" y="25.5" width="2.2" height="2.2" fill="#d0d0d0"/></svg>
<div style="position:absolute;left:301.82px;top:613.18px;line-height:40px;font-size:27.762px;font-family:'Liberation Sans', sans-serif;color:#f8f8f8;white-space:pre;-webkit-text-stroke:0.65px #f8f8f8;transform:scaleX(0.908);transform-origin:0 0;">CAVS</div>
<svg style="position:absolute;left:252px;top:658px" width="28" height="32" viewBox="0 0 28 32"><rect x="1" y="1" width="26" height="30" rx="4.5" fill="#4a4948" stroke="#a9a8a7" stroke-width="2"/><path d="M2 22 H26" stroke="#a9a8a7" stroke-width="2"/><rect x="3.5" y="24.5" width="21" height="4" rx="1.5" fill="#3f3e3d"/><rect x="21.5" y="25.5" width="2.2" height="2.2" fill="#d0d0d0"/></svg>
<div style="position:absolute;left:301.96px;top:653.18px;line-height:40px;font-size:27.762px;font-family:'Liberation Sans', sans-serif;color:#f8f8f8;white-space:pre;-webkit-text-stroke:0.65px #f8f8f8;transform:scaleX(0.908);transform-origin:0 0;">SMBS</div>
<svg style="position:absolute;left:252px;top:698px" width="28" height="32" viewBox="0 0 28 32"><rect x="1" y="1" width="26" height="30" rx="4.5" fill="#4a4948" stroke="#a9a8a7" stroke-width="2"/><path d="M2 22 H26" stroke="#a9a8a7" stroke-width="2"/><rect x="3.5" y="24.5" width="21" height="4" rx="1.5" fill="#3f3e3d"/><rect x="21.5" y="25.5" width="2.2" height="2.2" fill="#d0d0d0"/></svg>
<div style="position:absolute;left:301.96px;top:693.18px;line-height:40px;font-size:27.762px;font-family:'Liberation Sans', sans-serif;color:#f8f8f8;white-space:pre;-webkit-text-stroke:0.65px #f8f8f8;transform:scaleX(0.908);transform-origin:0 0;">SPIC</div>
<svg style="position:absolute;left:252px;top:738px" width="28" height="32" viewBox="0 0 28 32"><rect x="1" y="1" width="26" height="30" rx="4.5" fill="#4a4948" stroke="#a9a8a7" stroke-width="2"/><path d="M2 22 H26" stroke="#a9a8a7" stroke-width="2"/><rect x="3.5" y="24.5" width="21" height="4" rx="1.5" fill="#3f3e3d"/><rect x="21.5" y="25.5" width="2.2" height="2.2" fill="#d0d0d0"/></svg>
<div style="position:absolute;left:301.03px;top:733.18px;line-height:40px;font-size:27.762px;font-family:'Liberation Sans', sans-serif;color:#f8f8f8;white-space:pre;-webkit-text-stroke:0.65px #f8f8f8;transform:scaleX(0.908);transform-origin:0 0;">NTPK</div>
<svg style="position:absolute;left:252px;top:778px" width="28" height="32" viewBox="0 0 28 32"><rect x="1" y="1" width="26" height="30" rx="4.5" fill="#4a4948" stroke="#a9a8a7" stroke-width="2"/><path d="M2 22 H26" stroke="#a9a8a7" stroke-width="2"/><rect x="3.5" y="24.5" width="21" height="4" rx="1.5" fill="#3f3e3d"/><rect x="21.5" y="25.5" width="2.2" height="2.2" fill="#d0d0d0"/></svg>
<div style="position:absolute;left:301.83px;top:773.18px;line-height:40px;font-size:27.762px;font-family:'Liberation Sans', sans-serif;color:#f8f8f8;white-space:pre;-webkit-text-stroke:0.65px #f8f8f8;transform:scaleX(0.908);transform-origin:0 0;">GBE1</div>
<svg style="position:absolute;left:252px;top:818px" width="28" height="32" viewBox="0 0 28 32"><rect x="1" y="1" width="26" height="30" rx="4.5" fill="#4a4948" stroke="#a9a8a7" stroke-width="2"/><path d="M2 22 H26" stroke="#a9a8a7" stroke-width="2"/><rect x="3.5" y="24.5" width="21" height="4" rx="1.5" fill="#3f3e3d"/><rect x="21.5" y="25.5" width="2.2" height="2.2" fill="#d0d0d0"/></svg>
<div style="position:absolute;left:301.96px;top:813.18px;line-height:40px;font-size:27.762px;font-family:'Liberation Sans', sans-serif;color:#f8f8f8;white-space:pre;-webkit-text-stroke:0.65px #f8f8f8;transform:scaleX(0.908);transform-origin:0 0;">SAT2</div>
<svg style="position:absolute;left:252px;top:858px" width="28" height="32" viewBox="0 0 28 32"><rect x="1" y="1" width="26" height="30" rx="4.5" fill="#4a4948" stroke="#a9a8a7" stroke-width="2"/><path d="M2 22 H26" stroke="#a9a8a7" stroke-width="2"/><rect x="3.5" y="24.5" width="21" height="4" rx="1.5" fill="#3f3e3d"/><rect x="21.5" y="25.5" width="2.2" height="2.2" fill="#d0d0d0"/></svg>
<div style="position:absolute;left:301.96px;top:853.18px;line-height:40px;font-size:27.762px;font-family:'Liberation Sans', sans-serif;color:#f8f8f8;white-space:pre;-webkit-text-stroke:0.65px #f8f8f8;transform:scaleX(0.908);transform-origin:0 0;">SAT1</div>
<svg style="position:absolute;left:220px;top:898px" width="28" height="32" viewBox="0 0 28 32"><rect x="1" y="1" width="26" height="30" rx="4.5" fill="#4a4948" stroke="#a9a8a7" stroke-width="2"/><path d="M2 22 H26" stroke="#a9a8a7" stroke-width="2"/><rect x="3.5" y="24.5" width="21" height="4" rx="1.5" fill="#3f3e3d"/><rect x="21.5" y="25.5" width="2.2" height="2.2" fill="#d0d0d0"/></svg>
<svg style="position:absolute;left:191px;top:904px" width="16" height="19" viewBox="0 0 16 19"><path d="M0.5 0.5 L15.5 9.5 L0.5 18.5 Z" fill="#a9a9a8"/></svg>
<div style="position:absolute;left:269.03px;top:893.18px;line-height:40px;font-size:27.762px;font-family:'Liberation Sans', sans-serif;color:#f8f8f8;white-space:pre;-webkit-text-stroke:0.65px #f8f8f8;transform:scaleX(0.908);transform-origin:0 0;">PC01</div>
<svg style="position:absolute;left:220px;top:938px" width="28" height="32" viewBox="0 0 28 32"><rect x="1" y="1" width="26" height="30" rx="4.5" fill="#4a4948" stroke="#a9a8a7" stroke-width="2"/><path d="M2 22 H26" stroke="#a9a8a7" stroke-width="2"/><rect x="3.5" y="24.5" width="21" height="4" rx="1.5" fill="#3f3e3d"/><rect x="21.5" y="25.5" width="2.2" height="2.2" fill="#d0d0d0"/></svg>
<svg style="position:absolute;left:191px;top:944px" width="16" height="19" viewBox="0 0 16 19"><path d="M0.5 0.5 L15.5 9.5 L0.5 18.5 Z" fill="#a9a9a8"/></svg>
<div style="position:absolute;left:269.03px;top:933.18px;line-height:40px;font-size:27.762px;font-family:'Liberation Sans', sans-serif;color:#f8f8f8;white-space:pre;-webkit-text-stroke:0.65px #f8f8f8;transform:scaleX(0.908);transform-origin:0 0;">PC02</div>
<svg style="position:absolute;left:220px;top:978px" width="28" height="32" viewBox="0 0 28 32"><rect x="1" y="1" width="26" height="30" rx="4.5" fill="#4a4948" stroke="#a9a8a7" stroke-width="2"/><path d="M2 22 H26" stroke="#a9a8a7" stroke-width="2"/><rect x="3.5" y="24.5" width="21" height="4" rx="1.5" fill="#3f3e3d"/><rect x="21.5" y="25.5" width="2.2" height="2.2" fill="#d0d0d0"/></svg>
<svg style="position:absolute;left:191px;top:984px" width="16" height="19" viewBox="0 0 16 19"><path d="M0.5 0.5 L15.5 9.5 L0.5 18.5 Z" fill="#a9a9a8"/></svg>
<div style="position:absolute;left:269.03px;top:973.18px;line-height:40px;font-size:27.762px;font-family:'Liberation Sans', sans-serif;color:#f8f8f8;white-space:pre;-webkit-text-stroke:0.65px #f8f8f8;transform:scaleX(0.908);transform-origin:0 0;">PC03</div>
<svg style="position:absolute;left:220px;top:1018px" width="28" height="32" viewBox="0 0 28 32"><rect x="1" y="1" width="26" height="30" rx="4.5" fill="#4a4948" stroke="#a9a8a7" stroke-width="2"/><path d="M2 22 H26" stroke="#a9a8a7" stroke-width="2"/><rect x="3.5" y="24.5" width="21" height="4" rx="1.5" fill="#3f3e3d"/><rect x="21.5" y="25.5" width="2.2" height="2.2" fill="#d0d0d0"/></svg>
<svg style="position:absolute;left:191px;top:1024px" width="16" height="19" viewBox="0 0 16 19"><path d="M0.5 0.5 L15.5 9.5 L0.5 18.5 Z" fill="#a9a9a8"/></svg>
<div style="position:absolute;left:269.03px;top:1013.18px;line-height:40px;font-size:27.762px;font-family:'Liberation Sans', sans-serif;color:#f8f8f8;white-space:pre;-webkit-text-stroke:0.65px #f8f8f8;transform:scaleX(0.908);transform-origin:0 0;">PC04</div>
<svg style="position:absolute;left:220px;top:1058px" width="28" height="32" viewBox="0 0 28 32"><rect x="1" y="1" width="26" height="30" rx="4.5" fill="#4a4948" stroke="#a9a8a7" stroke-width="2"/><path d="M2 22 H26" stroke="#a9a8a7" stroke-width="2"/><rect x="3.5" y="24.5" width="21" height="4" rx="1.5" fill="#3f3e3d"/><rect x="21.5" y="25.5" width="2.2" height="2.2" fill="#d0d0d0"/></svg>
<svg style="position:absolute;left:191px;top:1064px" width="16" height="19" viewBox="0 0 16 19"><path d="M0.5 0.5 L15.5 9.5 L0.5 18.5 Z" fill="#a9a9a8"/></svg>
<div style="position:absolute;left:269.03px;top:1053.18px;line-height:40px;font-size:27.762px;font-family:'Liberation Sans', sans-serif;color:#f8f8f8;white-space:pre;-webkit-text-stroke:0.65px #f8f8f8;transform:scaleX(0.908);transform-origin:0 0;">PC05</div>
<svg style="position:absolute;left:186px;top:1101px" width="32" height="28" viewBox="0 0 32 28"><path d="M1 3.5 Q1 1 3.5 1 H10 Q11.5 1 12.5 2.5 L13.5 4 H28.5 Q31 4 31 6.5 V24.5 Q31 27 28.5 27 H3.5 Q1 27 1 24.5 Z" fill="#3a3938" stroke="#bab9b8" stroke-width="2"/><rect x="2" y="9" width="28" height="17" fill="#555453"/><path d="M2 8.2 H30" stroke="#bab9b8" stroke-width="2"/></svg>
<div style="position:absolute;left:237.88px;top:1093.18px;line-height:40px;font-size:27.762px;font-family:'Liberation Sans', sans-serif;color:#f8f8f8;white-space:pre;-webkit-text-stroke:0.65px #f8f8f8;transform:scaleX(0.908);transform-origin:0 0;"><span style="position:relative;top:-2px">_</span>GPE</div>
<svg style="position:absolute;left:186px;top:1140px" width="32" height="28" viewBox="0 0 32 28"><g stroke="#a6a5a4" stroke-width="3.8" stroke-linecap="round" fill="none"><path d="M13.2 2.2 L27.2 25.8"/><path d="M18.7 2.2 L9.2 18.5"/><path d="M2.5 18.5 H29.5"/><path d="M4.6 25.8 L6.2 23.2"/></g></svg>
<div style="position:absolute;left:237.88px;top:1133.18px;line-height:40px;font-size:27.762px;font-family:'Liberation Sans', sans-serif;color:#f8f8f8;white-space:pre;-webkit-text-stroke:0.65px #f8f8f8;transform:scaleX(0.908);transform-origin:0 0;"><span style="position:relative;top:-2px">_</span>PTS</div>
<svg style="position:absolute;left:186px;top:1180px" width="32" height="28" viewBox="0 0 32 28"><g stroke="#a6a5a4" stroke-width="3.8" stroke-linecap="round" fill="none"><path d="M13.2 2.2 L27.2 25.8"/><path d="M18.7 2.2 L9.2 18.5"/><path d="M2.5 18.5 H29.5"/><path d="M4.6 25.8 L6.2 23.2"/></g></svg>
<div style="position:absolute;left:237.88px;top:1173.18px;line-height:40px;font-size:27.762px;font-family:'Liberation Sans', sans-serif;color:#f8f8f8;white-space:pre;-webkit-text-stroke:0.65px #f8f8f8;transform:scaleX(0.908);transform-origin:0 0;"><span style="position:relative;top:-2px">_</span>WAK</div>
<svg style="position:absolute;left:186px;top:1220px" width="32" height="28" viewBox="0 0 32 28"><g stroke="#a6a5a4" stroke-width="3.8" stroke-linecap="round" fill="none"><path d="M13.2 2.2 L27.2 25.8"/><path d="M18.7 2.2 L9.2 18.5"/><path d="M2.5 18.5 H29.5"/><path d="M4.6 25.8 L6.2 23.2"/></g></svg>
<div style="position:absolute;left:235.56px;top:1213.18px;line-height:40px;font-size:27.762px;font-family:'Liberation Sans', sans-serif;color:#f8f8f8;white-space:pre;-webkit-text-stroke:0.65px #f8f8f8;transform:scaleX(0.908);transform-origin:0 0;">UXDV</div>
<svg style="position:absolute;left:186px;top:1260px" width="32" height="28" viewBox="0 0 32 28"><g stroke="#a6a5a4" stroke-width="3.8" stroke-linecap="round" fill="none"><path d="M13.2 2.2 L27.2 25.8"/><path d="M18.7 2.2 L9.2 18.5"/><path d="M2.5 18.5 H29.5"/><path d="M4.6 25.8 L6.2 23.2"/></g></svg>
<div style="position:absolute;left:235.43px;top:1253.18px;line-height:40px;font-size:27.762px;font-family:'Liberation Sans', sans-serif;color:#f8f8f8;white-space:pre;-webkit-text-stroke:0.65px #f8f8f8;transform:scaleX(0.908);transform-origin:0 0;">RRIO</div>
<svg style="position:absolute;left:186px;top:1300px" width="32" height="28" viewBox="0 0 32 28"><g stroke="#a6a5a4" stroke-width="3.8" stroke-linecap="round" fill="none"><path d="M13.2 2.2 L27.2 25.8"/><path d="M18.7 2.2 L9.2 18.5"/><path d="M2.5 18.5 H29.5"/><path d="M4.6 25.8 L6.2 23.2"/></g></svg>
<div style="position:absolute;left:235.43px;top:1293.18px;line-height:40px;font-size:27.762px;font-family:'Liberation Sans', sans-serif;color:#f8f8f8;white-space:pre;-webkit-text-stroke:0.65px #f8f8f8;transform:scaleX(0.908);transform-origin:0 0;">RDMA</div>
<svg style="position:absolute;left:186px;top:1341px" width="32" height="28" viewBox="0 0 32 28"><path d="M1 3.5 Q1 1 3.5 1 H10 Q11.5 1 12.5 2.5 L13.5 4 H28.5 Q31 4 31 6.5 V24.5 Q31 27 28.5 27 H3.5 Q1 27 1 24.5 Z" fill="#3a3938" stroke="#bab9b8" stroke-width="2"/><rect x="2" y="9" width="28" height="17" fill="#555453"/><path d="M2 8.2 H30" stroke="#bab9b8" stroke-width="2"/></svg>
<svg style="position:absolute;left:159px;top:1344px" width="16" height="19" viewBox="0 0 16 19"><path d="M0.5 0.5 L15.5 9.5 L0.5 18.5 Z" fill="#a9a9a8"/></svg>
<div style="position:absolute;left:237.88px;top:1333.18px;line-height:40px;font-size:27.762px;font-family:'Liberation Sans', sans-serif;color:#f8f8f8;white-space:pre;-webkit-text-stroke:0.65px #f8f8f8;transform:scaleX(0.908);transform-origin:0 0;"><span style="position:relative;top:-2px">_</span>SB</div>
<svg style="position:absolute;left:186px;top:1381px" width="32" height="28" viewBox="0 0 32 28"><path d="M1 3.5 Q1 1 3.5 1 H10 Q11.5 1 12.5 2.5 L13.5 4 H28.5 Q31 4 31 6.5 V24.5 Q31 27 28.5 27 H3.5 Q1 27 1 24.5 Z" fill="#3a3938" stroke="#bab9b8" stroke-width="2"/><rect x="2" y="9" width="28" height="17" fill="#555453"/><path d="M2 8.2 H30" stroke="#bab9b8" stroke-width="2"/></svg>
<svg style="position:absolute;left:157px;top:1387px" width="19" height="15" viewBox="0 0 19 15"><path d="M0.5 0.5 L18.5 0.5 L9.5 14.5 Z" fill="#b4b3b2"/></svg>
<div style="position:absolute;left:237.88px;top:1373.18px;line-height:40px;font-size:27.762px;font-family:'Liberation Sans', sans-serif;color:#f8f8f8;white-space:pre;-webkit-text-stroke:0.65px #f8f8f8;transform:scaleX(0.908);transform-origin:0 0;"><span style="position:relative;top:-2px">_</span>SB.PC00.LP…</div>
<div style="position:absolute;left:112px;top:1414px;width:314px;height:40px;background:#575655;"></div>
<svg style="position:absolute;left:220px;top:1418px" width="28" height="32" viewBox="0 0 28 32"><rect x="1" y="1" width="26" height="30" rx="4.5" fill="#6a6968" stroke="#cfcecd" stroke-width="2"/><path d="M2 22 H26" stroke="#cfcecd" stroke-width="2"/><rect x="3.5" y="24.5" width="21" height="4" rx="1.5" fill="#535251"/><rect x="21.5" y="25.5" width="2.2" height="2.2" fill="#d0d0d0"/></svg>
<svg style="position:absolute;left:189px;top:1427px" width="19" height="15" viewBox="0 0 19 15"><path d="M0.5 0.5 L18.5 0.5 L9.5 14.5 Z" fill="#d6d5d4"/></svg>
<div style="position:absolute;left:269.03px;top:1413.18px;line-height:40px;font-size:27.762px;font-family:'Liberation Sans', sans-serif;color:#f8f8f8;white-space:pre;-webkit-text-stroke:0.65px #f8f8f8;transform:scaleX(0.908);transform-origin:0 0;">EC0</div>
</div></div>
<div style="position:absolute;left:144.1px;top:119.24px;height:80px;font-family:'Liberation Serif', serif;font-style:italic;font-weight:bold;font-size:61.5px;line-height:80px;white-space:pre;transform:scaleX(0.806);transform-origin:0 0;background:linear-gradient(rgba(0,0,0,0) 24%, #80a4c6 25%, #3b5c7d 75%, rgba(0,0,0,0) 76%);-webkit-background-clip:text;background-clip:text;color:transparent;">A</div>
<div style="position:absolute;left:133px;top:178.5px;width:50px;height:4px;border-radius:50%;background:radial-gradient(ellipse at center, rgba(0,0,0,0.35), rgba(0,0,0,0) 70%);"></div>
<svg style="position:absolute;left:905px;top:124px;overflow:visible" width="68" height="68" viewBox="905 124 68 68"><defs><linearGradient id="gw" x1="0" y1="0" x2="1" y2="1"><stop offset="0" stop-color="#dde9ef"/><stop offset="1" stop-color="#97a6ae"/></linearGradient></defs><path d="M912.5 178 L943.5 145.5 L950 151.5 L919 184 Q914.5 187.5 911.5 184.5 Q908.5 181 912.5 178 Z" fill="url(#gw)" stroke="#5f6f78" stroke-width="0.7"/><circle cx="915.3" cy="180.6" r="2.1" fill="#4a4a4a" stroke="#9fb0b8" stroke-width="0.6"/><path d="M943 147 Q943.5 136 951.5 130.5 Q956 128 961 129.3 L955 136.5 Q956 140.5 958.5 141.5 L966.8 136.2 Q968 144 962.5 149.5 Q956 153.5 949.5 152 Z" fill="url(#gw)" stroke="#5f6f78" stroke-width="0.7"/><path d="M942 156 L956 172" stroke="#aab6bc" stroke-width="3" stroke-linecap="round"/><path d="M955.5 172.5 L965 183" stroke="#d5dcdf" stroke-width="5.2" stroke-linecap="round"/><path d="M960 179 L966.5 185.5" stroke="#c3cbcf" stroke-width="3.2" stroke-linecap="round"/><path d="M915.5 134 L938 153" stroke="#000" stroke-width="9" stroke-linecap="round"/><path d="M915.5 134 L938 153" stroke="#1a1a1a" stroke-width="7.6" stroke-linecap="round"/><path d="M914.5 132.2 L936 150.6" stroke="#555" stroke-width="1.2" stroke-linecap="round"/><path d="M935.8 153.8 L942.3 159.4" stroke="#0c0c0c" stroke-width="10" stroke-linecap="round"/><path d="M936 152.2 L941.5 157" stroke="#4a4a4a" stroke-width="1" stroke-linecap="round"/></svg>
<svg style="position:absolute;left:998px;top:133px;overflow:visible" width="64" height="52" viewBox="998 133 64 52"><defs><linearGradient id="gf" x1="0" y1="0" x2="0" y2="1"><stop offset="0" stop-color="#9e97d2"/><stop offset="1" stop-color="#a099d4"/></linearGradient></defs><path d="M1000 138 Q1000 135 1003 135 H1017 Q1019 135 1020.5 137 L1022 140 H1057 Q1060 140 1060 143 V150 H1000 Z" fill="#7870b4"/><rect x="1000" y="143" width="60" height="39.5" rx="2.5" fill="url(#gf)"/><rect x="1000" y="143" width="60" height="1.2" fill="#b8b0ea" opacity="0.8"/><rect x="1028.50" y="146.70" width="3.4" height="5" rx="1" fill="#7c74c0" transform="rotate(0.0 1030.10 160.90)"/><rect x="1028.50" y="146.70" width="3.4" height="5" rx="1" fill="#7c74c0" transform="rotate(30.0 1030.10 160.90)"/><rect x="1028.50" y="146.70" width="3.4" height="5" rx="1" fill="#7c74c0" transform="rotate(60.0 1030.10 160.90)"/><rect x="1028.50" y="146.70" width="3.4" height="5" rx="1" fill="#7c74c0" transform="rotate(90.0 1030.10 160.90)"/><rect x="1028.50" y="146.70" width="3.4" height="5" rx="1" fill="#7c74c0" transform="rotate(120.0 1030.10 160.90)"/><rect x="1028.50" y="146.70" width="3.4" height="5" rx="1" fill="#7c74c0" transform="rotate(150.0 1030.10 160.90)"/><rect x="1028.50" y="146.70" width="3.4" height="5" rx="1" fill="#7c74c0" transform="rotate(180.0 1030.10 160.90)"/><rect x="1028.50" y="146.70" width="3.4" height="5" rx="1" fill="#7c74c0" transform="rotate(210.0 1030.10 160.90)"/><rect x="1028.50" y="146.70" width="3.4" height="5" rx="1" fill="#7c74c0" transform="rotate(240.0 1030.10 160.90)"/><rect x="1028.50" y="146.70" width="3.4" height="5" rx="1" fill="#7c74c0" transform="rotate(270.0 1030.10 160.90)"/><rect x="1028.50" y="146.70" width="3.4" height="5" rx="1" fill="#7c74c0" transform="rotate(300.0 1030.10 160.90)"/><rect x="1028.50" y="146.70" width="3.4" height="5" rx="1" fill="#7c74c0" transform="rotate(330.0 1030.10 160.90)"/><circle cx="1030.1" cy="160.9" r="10.3" fill="#7c74c0"/><circle cx="1030.1" cy="160.9" r="6.3" fill="#a29bd6"/><rect x="1000" y="174.5" width="60" height="1" fill="#8d82cf" opacity="0.8"/><rect x="1000" y="177" width="60" height="1" fill="#8d82cf" opacity="0.7"/><rect x="1000" y="181.5" width="60" height="1.2" fill="#6e64b0" opacity="0.9"/></svg>
<svg style="position:absolute;left:1794px;top:127px;overflow:visible" width="62" height="62" viewBox="1794 127 62 62"><defs><linearGradient id="gi" x1="0" y1="0" x2="0" y2="1"><stop offset="0" stop-color="#6088e0"/><stop offset="1" stop-color="#3a69d5"/></linearGradient></defs><circle cx="1824.2" cy="158.6" r="26.2" fill="rgba(0,0,0,0.35)"/><circle cx="1824.2" cy="157.6" r="26.1" fill="url(#gi)" stroke="#2350c0" stroke-width="1"/><circle cx="1827.3" cy="144.3" r="4.1" fill="#fff"/><path d="M1816.6 159.2 Q1819 152.2 1824.6 151 L1829.4 151 L1823.4 171.2 Q1825.2 172.2 1830 166.2 L1830.8 167.2 Q1826.4 176.8 1819.6 176.8 Q1815.2 176.4 1816.8 170.8 L1821.4 155.8 Q1819.4 156.6 1817.8 159.6 Z" fill="#fff"/></svg>
<svg style="position:absolute;left:1890px;top:125px;overflow:visible" width="64" height="65" viewBox="1890 125 64 65"><defs><linearGradient id="gp" x1="0" y1="0" x2="0" y2="1"><stop offset="0" stop-color="#e6e6e6"/><stop offset="1" stop-color="#fbfbfb"/></linearGradient></defs><path d="M1910.8 127.9 H1933.8 L1950.8 141.5 V180.1 H1910.8 Z" fill="url(#gp)" stroke="rgba(0,0,0,0.25)" stroke-width="0.6"/><path d="M1933.8 127.9 Q1934.8 141.5 1950.8 141.5 Q1944.0 143.2 1933.8 127.9 Z" fill="#d6d6d6"/><path d="M1902.0 131.0 H1925.0 L1942.0 144.6 V183.0 H1902.0 Z" fill="url(#gp)" stroke="rgba(0,0,0,0.25)" stroke-width="0.6"/><path d="M1925.0 131.0 Q1926.0 144.6 1942.0 144.6 Q1935.2 146.3 1925.0 131.0 Z" fill="#d6d6d6"/><path d="M1893.7 133.9 H1917.0 L1934.0 147.5 V186.5 H1893.7 Z" fill="url(#gp)" stroke="rgba(0,0,0,0.25)" stroke-width="0.6"/><path d="M1917.0 133.9 Q1918.0 147.5 1934.0 147.5 Q1927.2 149.2 1917.0 133.9 Z" fill="#d6d6d6"/></svg>
<svg style="position:absolute;left:1972px;top:125px;overflow:visible" width="60" height="64" viewBox="1972 125 60 64"><defs><linearGradient id="gpr" x1="0" y1="0" x2="0" y2="1"><stop offset="0" stop-color="#f4f4f4"/><stop offset="0.6" stop-color="#e2e2e2"/><stop offset="1" stop-color="#b9b9b9"/></linearGradient><linearGradient id="gsl" x1="0" y1="0" x2="1" y2="0"><stop offset="0" stop-color="#1f2a3a"/><stop offset="0.5" stop-color="#5a7090"/><stop offset="1" stop-color="#1f2a3a"/></linearGradient></defs><rect x="1991.8" y="128.1" width="20.2" height="6" fill="#8b9ab0"/><rect x="1987.7" y="133.9" width="28.3" height="18" fill="#f7f7f7" stroke="#c8c8c8" stroke-width="0.5"/><path d="M1979 149 H2024.5 Q2027.6 149 2027.6 153 V175 Q2027.6 178 2024.5 178 H1979 Q1975.6 178 1975.6 175 V153 Q1975.6 149 1979 149 Z" fill="url(#gpr)"/><rect x="1985.4" y="152.2" width="32.4" height="3.8" fill="url(#gsl)"/><rect x="1976" y="160.5" width="51" height="0.8" fill="#c9c9c9"/><rect x="1979.6" y="160" width="2.6" height="2.2" fill="#e0502c"/><rect x="1982.6" y="160" width="2.6" height="2.2" fill="#e8902c"/><rect x="2017" y="160" width="2.5" height="2" fill="#444"/><rect x="2021" y="160" width="2.5" height="2" fill="#444"/><rect x="1985.4" y="172" width="33.6" height="12.2" fill="#e9e9e9" stroke="#9a9a9a" stroke-width="0.6"/><rect x="1987.5" y="174" width="29.5" height="8" fill="#fbfbfb"/><rect x="1990" y="176" width="24" height="0.8" fill="#bbb"/><rect x="1990" y="179" width="24" height="0.8" fill="#bbb"/></svg>
<div style="position:absolute;left:489px;top:242px;width:1227.5px;height:48px;border-radius:13px;background:#1e73a0;"></div>
<div style="position:absolute;left:495.5px;top:248.5px;width:1215px;height:35px;border-radius:7px;background:#2b86b6;"></div>
<div style="position:absolute;left:496.5px;top:249.5px;width:1213px;height:33px;border-radius:6px;background:#42403f;"></div>
<svg style="position:absolute;left:505px;top:253px" width="36" height="28" viewBox="505 253 36 28"><circle cx="516.5" cy="264.6" r="7.3" fill="none" stroke="#dcdcdc" stroke-width="1.7"/><path d="M521.8 270 L528.3 276.6" stroke="#dcdcdc" stroke-width="1.9" stroke-linecap="round"/><path d="M528.3 263.6 L532.6 267.4 L536.8 263.8" fill="none" stroke="#dcdcdc" stroke-width="1.6" stroke-linecap="round" stroke-linejoin="round"/></svg>
<div style="position:absolute;left:546px;top:253px;width:104px;height:28px;background:#386690;"></div>
<div style="position:absolute;left:545.60px;top:248.94px;line-height:36px;font-size:23.838px;font-family:'Liberation Sans', sans-serif;color:#ffffff;white-space:pre;transform:scaleX(0.9707);transform-origin:0 0;-webkit-text-stroke:0.35px #fff;">PNP0C09</div>
<svg style="position:absolute;left:1660px;top:255px" width="16" height="24" viewBox="1660 255 16 24"><path d="M1664.2 262.6 L1670.2 258.4 V274.7" fill="none" stroke="#727170" stroke-width="2" stroke-linejoin="round"/></svg>
<svg style="position:absolute;left:1681px;top:254px" width="24" height="24" viewBox="1681 254 24 24"><circle cx="1693" cy="265.9" r="11.1" fill="#aaa9a8"/><path d="M1688.6 261.5 L1697.4 270.3 M1697.4 261.5 L1688.6 270.3" stroke="#3c3b3a" stroke-width="2.2" stroke-linecap="round"/></svg>
<div style="position:absolute;left:1728.4px;top:250.4px;width:69px;height:31.2px;border-radius:7px;border:2px solid #777675;background:#3b3938;"></div>
<div style="position:absolute;left:1762.3px;top:251px;width:1.8px;height:30px;background:#777675;"></div>
<svg style="position:absolute;left:1730px;top:252px" width="66" height="28" viewBox="1730 252 66 28"><path d="M1748.3 258.8 L1738.2 265.5 L1748.3 272.2" fill="none" stroke="#dddddd" stroke-width="1.7" stroke-linecap="round" stroke-linejoin="round"/><path d="M1775.8 258.8 L1785.9 265.5 L1775.8 272.2" fill="none" stroke="#dddddd" stroke-width="1.7" stroke-linecap="round" stroke-linejoin="round"/></svg>
<div style="position:absolute;left:1814.1px;top:250.4px;width:83.6px;height:31.2px;border-radius:7px;border:2px solid #777675;background:#3b3938;"></div>
<div style="position:absolute;left:1827.48px;top:248.64px;line-height:35px;font-size:23.256px;font-family:'Liberation Sans', sans-serif;color:#e6e6e6;white-space:pre;transform:scaleX(1.0065);transform-origin:0 0;-webkit-text-stroke:0.35px #e6e6e6;">Done</div>
<div style="position:absolute;left:1914.3px;top:253.9px;width:23.6px;height:23.8px;border-radius:5px;background:linear-gradient(#5a5958,#6d6c6b);"></div>
<div style="position:absolute;left:1946.41px;top:248.64px;line-height:35px;font-size:23.256px;font-family:'Liberation Sans', sans-serif;color:#e6e6e6;white-space:pre;transform:scaleX(0.9917);transform-origin:0 0;-webkit-text-stroke:0.35px #e6e6e6;">Replace</div>
<svg style="position:absolute;left:128px;top:1465px" width="26" height="26" viewBox="128 1465 26 26"><circle cx="138.4" cy="1476.2" r="7.9" fill="none" stroke="#d6d6d6" stroke-width="1.7"/><path d="M144.3 1482.3 L150.6 1488.6" stroke="#d6d6d6" stroke-width="1.9" stroke-linecap="round"/></svg>
<div style="position:absolute;left:161.40px;top:1459.69px;line-height:36px;font-size:23.692px;font-family:'Liberation Sans', sans-serif;color:#6f6e6d;white-space:pre;transform:scaleX(0.9786);transform-origin:0 0;">Filter Tree</div>
<div style="position:absolute;left:151.77px;top:1501.04px;line-height:37px;font-size:24.710px;font-family:'Liberation Sans', sans-serif;color:#e8e8e8;white-space:pre;transform:scaleX(0.9510);transform-origin:0 0;-webkit-text-stroke:0.35px #e8e8e8;">DSDT</div>
<svg style="position:absolute;left:224px;top:1516px" width="10" height="10" viewBox="224 1516 10 10"><path d="M224.9 1516.5 L232.7 1520.7 L224.9 1524.9 Z" fill="#8a8988"/></svg>
<div style="position:absolute;left:241.36px;top:1501.04px;line-height:37px;font-size:24.710px;font-family:'Liberation Sans', sans-serif;color:#e8e8e8;white-space:pre;transform:scaleX(0.9713);transform-origin:0 0;-webkit-text-stroke:0.35px #e8e8e8;"><span style="position:relative;top:-2px">_</span>SB.PC00.LPC0</div>
<svg style="position:absolute;left:428px;top:1516px" width="10" height="10" viewBox="428 1516 10 10"><path d="M428.9 1516.5 L436.7 1520.7 L428.9 1524.9 Z" fill="#8a8988"/></svg>
<div style="position:absolute;left:442.98px;top:1501.04px;line-height:37px;font-size:24.710px;font-family:'Liberation Sans', sans-serif;color:#e8e8e8;white-space:pre;transform:scaleX(0.9983);transform-origin:0 0;-webkit-text-stroke:0.35px #e8e8e8;">EC0</div>
</div></div>
<div id="frame"></div>
<div style="position:absolute;left:2048px;top:232px;width:2px;height:1268px;background:#8e8d8c;"></div>
</body></html>
